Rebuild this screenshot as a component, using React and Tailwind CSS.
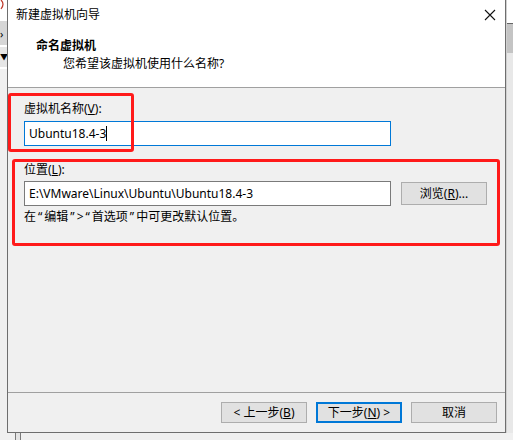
import React from 'react';

const FONT = { fontFamily: '"Noto Sans", "Noto Sans CJK SC", sans-serif' };

function Btn({ children, primary }) {
  return (
    <button
      className={
        primary
          ? 'w-[86px] h-[21px] flex items-center justify-center bg-[#e1e1e1] border-2 border-[#0078d7] text-[12px] text-black leading-none'
          : 'w-[86px] h-[21px] flex items-center justify-center bg-[#e1e1e1] border border-[#adadad] text-[12px] text-black leading-none'
      }
    >
      {children}
    </button>
  );
}

// quotes in the hint line sit a bit wider than Latin ones
function Q({ children }) {
  return <span className="mx-[2px]">{children}</span>;
}

export default function App() {
  return (
    <div className="w-[513px] h-[440px] overflow-hidden bg-[#f0f0f0] relative text-[12px] text-black" style={FONT}>
      <div className="flex h-[433px]">
        {/* background app, left edge */}
        <div className="w-[7px] flex flex-col">
          <div className="h-[21px] bg-white">
            <svg width="7" height="10" viewBox="0 0 7 10">
              <path d="M1 0 Q5 4 1 9" stroke="#c0392b" strokeWidth="1.2" fill="none" />
            </svg>
          </div>
          <div className="h-[24px] bg-[#d6d6d6] flex items-center text-[11px] leading-none">›</div>
          <div className="h-[2px] bg-white" />
          <div className="h-[20px] bg-[#e6e6e6] flex items-center text-[8px] leading-none">▼</div>
          <div className="h-[2px] bg-white" />
          <div className="flex-1 bg-[#f0f0f0]" />
        </div>

        {/* dialog */}
        <div className="w-[499px] flex flex-col border-x border-b border-[#6e6e6e] bg-[#f0f0f0]">
          <div className="h-[30px] bg-white flex items-center justify-between pl-[8px] pr-[9px]">
            <span className="leading-none">新建虚拟机向导</span>
            <svg width="12" height="12" viewBox="0 0 12 12">
              <path d="M1 1 L11 11 M11 1 L1 11" stroke="#111" strokeWidth="1.1" />
            </svg>
          </div>
          <div className="h-[58px] bg-white border-b border-[#a0a0a0] pt-[8px]">
            <div className="pl-[28px] font-bold leading-[16px]">命名虚拟机</div>
            <div className="pl-[55px] mt-[2px] leading-[16px]">您希望该虚拟机使用什么名称?</div>
          </div>

          <div className="flex-1 px-[16px] pt-[13px] flex flex-col">
            <div className="leading-[16px]">
              虚拟机名称(<span className="underline">V</span>):
            </div>
            <div className="mt-[4px] w-[367px] h-[25px] border border-[#0078d7] bg-white flex items-center pl-[4px]">
              <span className="leading-none">Ubuntu18.4-3</span>
              <span className="w-px h-[15px] bg-black" />
            </div>

            <div className="mt-[16px] leading-[16px]">
              位置(<span className="underline">L</span>):
            </div>
            <div className="mt-[3px] flex items-center gap-[10px]">
              <div className="w-[367px] h-[25px] border border-[#7a7a7a] bg-white flex items-center pl-[4px]">
                <span className="leading-none">E:\VMware\Linux\Ubuntu\Ubuntu18.4-3</span>
              </div>
              <button className="w-[86px] h-[23px] bg-[#e1e1e1] border border-[#adadad] flex items-center justify-center leading-none">
                浏览(<span className="underline">R</span>)...
              </button>
            </div>
            <div className="mt-[3px] leading-[16px]">
              在<Q>“</Q>编辑<Q>”</Q>&gt;<Q>“</Q>首选项<Q>”</Q>中可更改默认位置。
            </div>
          </div>

          <div className="h-[40px] border-t border-[#a0a0a0] flex justify-end gap-[9px] pr-[8px] pt-[9px]">
            <Btn>
              &lt; 上一步(<span className="underline">B</span>)
            </Btn>
            <Btn primary>
              下一步(<span className="underline">N</span>) &gt;
            </Btn>
            <Btn>取消</Btn>
          </div>
        </div>

        {/* background app, right edge */}
        <div className="flex-1 flex flex-col border-l border-[#d0d0d0]">
          <div className="h-[23px] bg-white" />
          <div className="h-[30px] bg-[#c4c4c4] border-t border-[#666]" />
          <div className="flex-1 bg-[#e8e8e8]" />
        </div>
      </div>

      {/* strip below dialog */}
      <div className="h-[7px] flex">
        <div className="ml-[15px] w-[6px] border-x border-[#7a7a7a] bg-[#e4e4e4]" />
      </div>

      {/* red annotation boxes */}
      <div className="absolute left-[8px] top-[93px] w-[126px] h-[59px] border-[3px] border-[#ff1a1a] rounded-[3px]" />
      <div className="absolute left-[12px] top-[159px] w-[488px] h-[87px] border-[3px] border-[#ff1a1a] rounded-[3px]" />
    </div>
  );
}
